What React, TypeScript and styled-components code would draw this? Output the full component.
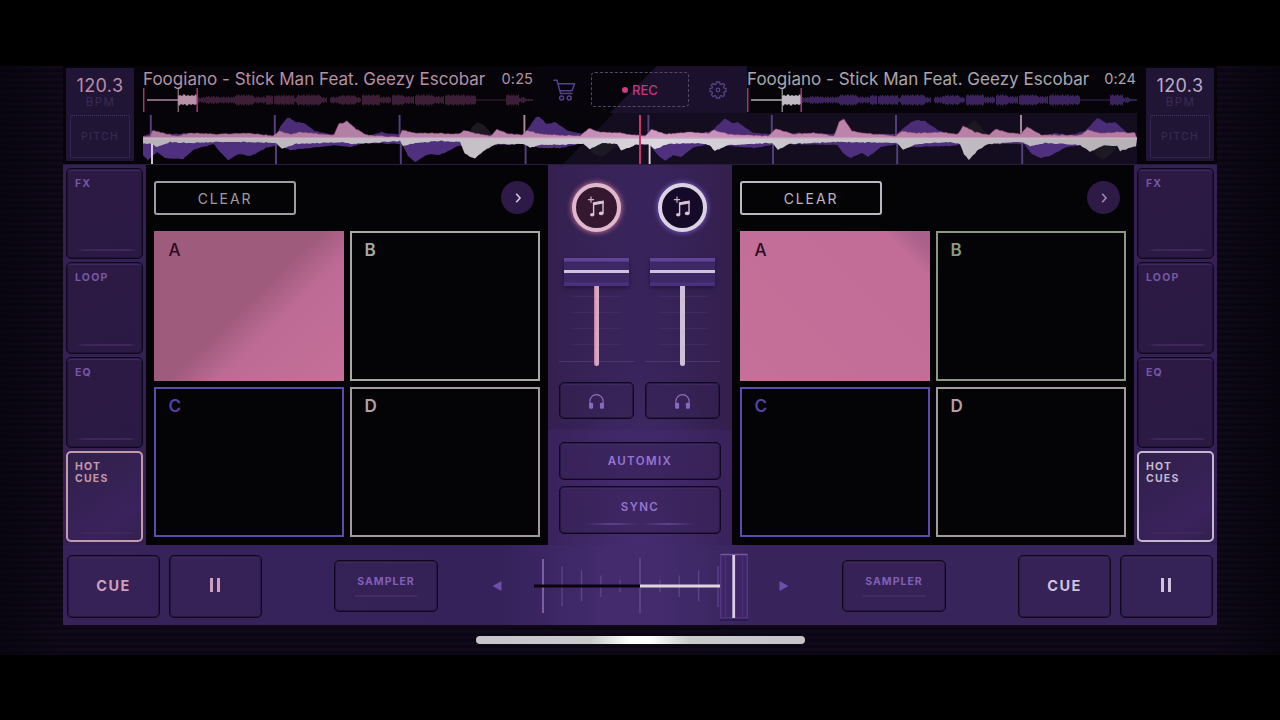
import React from 'react';
import styled, { createGlobalStyle, css } from 'styled-components';

const Global = createGlobalStyle`
  *{box-sizing:border-box}
  body{margin:0;background:#000;overflow:hidden;font-family:Inter,"Liberation Sans",sans-serif}
  button{font-family:inherit;margin:0;padding:0;background:none;border:0;display:block}
  svg{display:block}
`;

const Screen = styled.div`
  width:1280px;height:720px;background:#000;padding:66px 0 65px;
`;
const Stage = styled.main`
  height:589px;display:flex;flex-direction:column;align-items:center;
  background:
    linear-gradient(90deg,#05030b99 0,#05030b00 5%,#05030b00 95%,#05030bbb 100%),
    repeating-linear-gradient(180deg,#110919 0 3px,#0a0613 3px 6px);
`;
const Console = styled.section`
  width:1154px;height:559px;display:flex;flex-direction:column;
`;

const Header = styled.header`
  height:98px;display:flex;justify-content:space-between;padding:2px 3px 0;background:#060409;
`;
const Tempo = styled.div`
  width:68px;height:93px;background:#211535;display:flex;flex-direction:column;align-items:center;
`;
const Bpm = styled.div<{ $c: string }>`
  margin-top:8px;font-size:18px;line-height:20px;color:${p => p.$c};letter-spacing:.35px;
`;
const BpmLabel = styled.div`
  font-size:11.5px;line-height:12px;letter-spacing:1.4px;color:#3a2a54;padding-left:1px;
`;
const Pitch = styled.div`
  margin-top:7px;width:60px;height:43px;border:1px dotted #46346a;border-radius:2px;
  font-size:10.5px;letter-spacing:1.3px;color:#3b2b58;display:flex;align-items:center;justify-content:center;
`;
const Tracks = styled.div`
  width:994px;display:flex;flex-direction:column;
`;
const TrackRow = styled.div`
  height:45px;display:flex;
`;
const Track = styled.div<{ $w: number }>`
  width:${p => p.$w}px;padding-top:1px;
`;
const TitleLine = styled.div<{ $c: string }>`
  height:19px;display:flex;justify-content:space-between;align-items:center;color:${p => p.$c};white-space:nowrap;
`;
const Title = styled.span`font-size:17px;letter-spacing:.02px;line-height:20px;`;
const Time = styled.span`font-size:14.5px;line-height:20px;letter-spacing:.1px;padding-right:1px;`;
const Tools = styled.div`
  width:213px;height:47px;margin-top:-2px;display:flex;align-items:center;padding:0 0 0 18px;
  background:linear-gradient(135deg,#07040c 0 47%,#1b112d 47.5% 100%);
`;
const Rec = styled.button`
  margin:0 20px 0 15px;width:98px;height:35px;border:1px dashed #554867;border-radius:4px;
  color:#c5367d;font-size:13px;font-weight:500;display:flex;align-items:center;justify-content:center;gap:4px;
  &::before{content:"";width:6px;height:6px;border-radius:50%;background:#cf3a84}
`;
const WaveBox = styled.div`
  width:994px;height:51px;
  background:linear-gradient(135deg,transparent 0 calc(50% - 37px),#140d20 calc(50% - 36px));
`;

const Body = styled.div`
  height:381px;display:flex;border-top:1px solid #271c3b;background:#030305;
`;
const Side = styled.nav`
  width:83px;height:380px;padding:3px;display:flex;flex-direction:column;gap:3px;
  background:#352054;
`;
const Tab = styled.button<{ $on?: string }>`
  flex:1;width:77px;border-radius:5px;border:${p => p.$on ? `2px solid ${p.$on}` : '1px solid #0e081d'};
  background:${p => p.$on ? 'linear-gradient(145deg,#302049,#3a225c 75%,#33204f)' : 'linear-gradient(160deg,#2d1a44,#2a1a43)'};
  box-shadow:${p => p.$on ? 'none' : 'inset 0 0 0 1px #0e081d66,inset 0 2px 0 #3f2a65'};
  color:${p => p.$on || '#7557a5'};font-size:10.5px;line-height:12px;font-weight:700;letter-spacing:1.2px;text-align:left;
  display:flex;flex-direction:column;justify-content:space-between;padding:${p => p.$on ? '8px 5px 6px 7px' : '9px 6px 7px 8px'};white-space:pre-line;
  &::after{content:"";height:2px;margin-left:1px;background:linear-gradient(90deg,#3b275300,#3d2857 15%,#3d2857 90%,#3b275300)}
`;
const DeckPanel = styled.section`
  width:402px;height:380px;padding:16px 8px 8px;display:flex;flex-direction:column;background:#040406;
`;
const DeckHead = styled.div`
  height:50px;display:flex;justify-content:space-between;padding-right:6px;
`;
const Clear = styled.button<{ $c: string }>`
  width:142px;height:34px;border:2px solid ${p => p.$c};border-radius:3px;color:${p => p.$c};
  font-size:14px;letter-spacing:1.9px;
`;
const Next = styled.button`
  width:33px;height:33px;border-radius:50%;background:#2d1a46;display:flex;align-items:center;justify-content:center;
`;
const Pads = styled.div`
  height:306px;display:grid;grid-template-columns:190px 190px;grid-template-rows:150px 150px;gap:6px;
`;
const Pad = styled.button<{ $line: string; $text: string; $fill?: string }>`
  border:2px solid ${p => p.$line};color:${p => p.$text};
  ${p => p.$fill ? css`border-color:transparent;background:${p.$fill} border-box;font-weight:500;` : css`background:#040406;font-weight:600;`}
  font-size:17px;line-height:20px;text-align:left;display:flex;padding:7px 12.5px;
`;

const Mixer = styled.section`
  width:184px;height:380px;display:flex;flex-direction:column;align-items:center;
  background:
    linear-gradient(180deg,transparent 0 264px,#4b2c7f40 265px 275px,#4b2c7f40),
    radial-gradient(ellipse 90px 190px at 50% 100%,#4b307799,transparent),
    linear-gradient(90deg,#342050,#38245a 40%,#38245a 60%,#341f4e);
`;
const Channels = styled.div`
  display:flex;gap:11px;padding:18px 1px 0 0;
`;
const Channel = styled.div`
  width:75px;display:flex;flex-direction:column;align-items:center;
`;
const Load = styled.button<{ $ring: string; $bg: string; $glow: string }>`
  width:49px;height:49px;border:4px solid ${p => p.$ring};border-radius:50%;background:${p => p.$bg};
  box-shadow:0 0 5px 1px ${p => p.$glow};display:flex;align-items:center;justify-content:center;
`;
const Fader = styled.div`
  margin-top:26px;width:75px;height:108px;display:flex;flex-direction:column;align-items:center;
  background:repeating-linear-gradient(180deg,transparent 0 15px,#4a366a66 15px 16px) 50% 23px/48px 78px no-repeat,
    linear-gradient(#4b376c,#4b376c) 50% 103px/75px 1px no-repeat;
`;
const FaderCap = styled.div`
  width:65px;height:28px;display:flex;align-items:center;
  background:linear-gradient(180deg,#62439a 0 3px,#3d2765 4px 24px,#4b317b 25px);
  box-shadow:0 2px 4px #160b2990;
  &::after{content:"";width:65px;height:3px;margin-top:-1px;background:#d2c0dc}
`;
const FaderStem = styled.div<{ $c: string }>`
  width:5px;height:80px;border-radius:0 0 3px 3px;background:${p => p.$c};
`;
const PlainButton = styled.button<{ $w: number; $h: number }>`
  width:${p => p.$w}px;height:${p => p.$h}px;border:1px solid #10081f;border-radius:5px;
  background:#35204f66;box-shadow:inset 0 0 0 1px #10081f66,inset 0 2px 0 #4a326d66;
  display:flex;flex-direction:column;align-items:center;justify-content:center;
`;
const CueButton = styled(PlainButton)`margin-top:16px;padding-top:1px;`;
const Actions = styled.div`
  margin-top:23px;display:flex;flex-direction:column;gap:6px;
`;
const Action = styled(PlainButton)`
  color:#9675d2;font-size:11.5px;font-weight:600;letter-spacing:1.4px;
`;
const SyncAction = styled(Action)`
  justify-content:flex-start;padding-top:13px;
`;
const SyncMarks = styled.div`
  margin-top:9px;display:flex;gap:2px;
  i{width:54px;height:2px;background:linear-gradient(90deg,transparent,#5e438c,transparent)}
`;

const Footer = styled.footer`
  height:80px;padding:2px 4px 0;display:flex;align-items:center;
  background:linear-gradient(90deg,#37235a 0,#35225b 38%,#432b6d 47%,#432b6d 52%,#38245b 60%,#36245a 100%);
`;
const Transport = styled(PlainButton)<{ $c: string }>`
  color:${p => p.$c};font-size:14.5px;font-weight:700;letter-spacing:1.4px;padding-bottom:2px;
`;
const Pair = styled.div`display:flex;gap:9px;`;
const Sampler = styled(PlainButton)`
  color:#8060b8;font-size:10.5px;font-weight:700;letter-spacing:1px;justify-content:flex-start;padding-top:14px;line-height:14px;
  &::after{content:"";margin-top:6px;width:62px;height:2px;background:#422b63}
`;
const Cross = styled.div`width:300px;margin:-2px 52px 0;height:80px;`;
const Bars = styled.span<{ $c: string }>`
  width:10px;height:14px;margin-right:1px;border:solid ${p => p.$c};border-width:0 3px;
`;
const Home = styled.div`
  margin-top:11px;width:329px;height:8px;border-radius:4px;
  background:linear-gradient(90deg,#c8c5ca 0,#cbcacb 35%,#fff 47%,#fff 53%,#cbcacb 65%,#c8c5ca);
`;

const ROSE = '#c49aab';
const LILAC = '#c4b8d0';

/* start, end, half height of each loudness block of a track */
const BLOCKS: number[][] = [
  [54, 62, 3], [62, 75, 4], [75, 92, 3.5], [92, 110, 5.5], [110, 123, 3.5], [123, 130, 5], [131, 151, 5], [151, 154, 3],
  [154, 178, 5.5], [178, 184, 3], [187, 196, 3.5], [196, 213, 5], [213, 218, 3], [219, 237, 5.5], [237, 248, 3.5],
  [249, 260, 5.5], [260, 271, 4], [272, 290, 5.5], [290, 301, 4], [302, 322, 5.5], [322, 333, 5], [333, 363, .6],
  [363, 376, 5.5], [376, 383, 3], [383, 390, 1.3],
];

function overviewPath() {
  let d = '';
  BLOCKS.forEach(([a, b, h]) => {
    for (let x = a; x < b; x++) {
      const v = h < 1 ? h : Math.max(.8, h - ((x * 7) % 5) * .35);
      d += `M${x} ${12 - v}h1.05v${2 * v}h-1.05z`;
    }
  });
  return d;
}
const OVERVIEW = overviewPath();

function Overview({ played, rest, mark }: { played: string; rest: string; mark: string }) {
  return (
    <svg width="391" height="24" viewBox="0 0 391 24">
      <path d={OVERVIEW} fill={rest} />
      <path d="M4 12H36" stroke={played} strokeWidth="1.4" />
      <path d="M35 8l2-1 2 1 2-2 2 2 2-1 2 1 2-1 2 1 2-2 1 2v8l-2 1-2-1-2 1-2-1-2 2-2-2-2 1-2-1-2 2-1-2z" fill={played} />
      <path d="M35.2 0V24" stroke={played} strokeWidth="1" />
      <path d="M.7 0V24M54.2 0V24" stroke={mark} strokeWidth="1.5" />
    </svg>
  );
}

const hash = (n: number) => { const s = Math.sin(n * 12.9898) * 43758.5453; return s - Math.floor(s); };

/* area between a straight axis and an outline with a little roughness */
function area(axis: number, pts: number[][], rough: number) {
  let d = `M${pts[0][0]} ${axis}`;
  for (let i = 0; i < pts.length - 1; i++) {
    const [x0, y0] = pts[i], [x1, y1] = pts[i + 1];
    for (let x = x0; x < x1; x += 2) {
      const t = (x - x0) / (x1 - x0);
      d += `L${x} ${(y0 + (y1 - y0) * t + (hash(x) - .5) * rough).toFixed(1)}`;
    }
  }
  return d + `L${pts[pts.length - 1][0]} ${axis}Z`;
}

const VIOLET_TOP = [[143, 136], [152, 133], [170, 134], [190, 133], [196, 135], [240, 134], [276, 136], [280, 127], [287, 118], [290, 118], [296, 122], [304, 123], [315, 131], [330, 134],
  [372, 135], [381, 132], [392, 134], [403, 134], [440, 134], [500, 135], [524, 135], [530, 126], [536, 117], [539, 117], [547, 124], [555, 122], [568, 131], [583, 134], [648, 135], [700, 134], [713, 130],
  [724, 119], [728, 120], [732, 123], [738, 122], [753, 133], [772, 134], [800, 133], [835, 134], [897, 134], [911, 122], [917, 120], [925, 121], [938, 130], [950, 134], [1021, 135], [1046, 135], [1056, 133], [1070, 135], [1085, 131], [1097, 118], [1100, 119], [1107, 123], [1115, 122], [1128, 134], [1137, 134]];
const PINK_TOP = [[143, 136], [150, 136], [153, 130], [162, 133], [176, 136], [190, 133], [220, 134], [250, 133], [273, 136], [279, 131], [290, 134], [300, 132], [334, 135], [339, 123], [343, 123], [347, 121], [356, 129], [367, 135], [399, 137],
  [402, 130], [415, 133], [430, 133], [459, 134], [464, 130], [475, 133], [491, 136], [497, 129], [506, 133], [522, 135], [527, 130], [540, 134], [580, 136], [589, 128], [600, 132], [620, 133], [645, 136], [652, 129], [665, 134],
  [690, 132], [708, 133], [714, 130], [728, 134], [768, 136], [776, 129], [792, 134], [815, 133], [834, 136], [839, 122], [844, 119], [852, 131], [862, 133], [896, 136], [902, 131], [915, 133], [940, 132], [958, 134], [963, 126], [975, 132], [989, 135], [996, 129], [1008, 133],
  [1021, 134], [1027, 127], [1042, 135], [1080, 135], [1088, 130], [1100, 133], [1115, 132], [1137, 133]];
const WHITE_LOW = [[143, 143], [152, 144], [157, 147], [170, 142], [190, 143], [215, 142], [250, 142], [276, 143], [282, 149], [295, 144], [340, 142], [352, 144], [400, 141], [403, 146], [415, 143], [440, 141], [460, 142], [465, 154], [471, 157], [475, 158], [485, 150], [496, 144], [524, 144], [530, 148], [540, 145],
  [583, 144], [590, 149], [602, 143], [617, 144], [621, 151], [635, 145], [648, 144], [655, 149], [668, 144], [700, 143], [709, 145], [715, 151], [728, 145], [772, 143], [778, 150], [790, 144], [837, 142], [897, 143], [903, 150], [916, 144], [950, 142], [960, 144], [964, 154], [969, 160], [978, 150], [988, 144],
  [1021, 142], [1030, 146], [1045, 143], [1080, 145], [1090, 152], [1104, 145], [1117, 146], [1120, 151], [1137, 146]];
const VIOLET_LOW = [[143, 155], [148, 160], [157, 152], [165, 158], [183, 159], [195, 149], [214, 144], [220, 152], [228, 160], [239, 154], [251, 156], [266, 148], [278, 145], [290, 150], [310, 148], [335, 145], [350, 147], [365, 143], [402, 144], [408, 156], [415, 162], [428, 154], [440, 155], [458, 146], [524, 144], [540, 148], [560, 148],
  [580, 144], [617, 143], [650, 145], [657, 154], [665, 161], [673, 155], [681, 157], [694, 147], [710, 144], [755, 148], [776, 144], [837, 145], [843, 153], [850, 158], [862, 153], [868, 157], [881, 147], [899, 144], [912, 147], [950, 146], [962, 144], [1024, 144], [1032, 154], [1041, 158], [1050, 156], [1066, 147], [1090, 144], [1137, 146]];
const BEATS = [150.8, 274.8, 399.6, 524.4, 648.4, 771.8, 896, 1021];

function Wave() {
  return (
    <svg width="994" height="51" viewBox="143 113 994 51">
      <defs>
        <linearGradient id="white" gradientUnits="userSpaceOnUse" x1="143" y1="0" x2="1137" y2="0">
          <stop offset="0" stopColor="#b9b3b9" /><stop offset=".4" stopColor="#c9c4ca" /><stop offset=".52" stopColor="#dcd7df" /><stop offset=".65" stopColor="#c9c5cb" /><stop offset="1" stopColor="#b5b1b5" />
        </linearGradient>
        <linearGradient id="pink" gradientUnits="userSpaceOnUse" x1="143" y1="0" x2="1137" y2="0">
          <stop offset="0" stopColor="#ab789d" /><stop offset=".4" stopColor="#bb86ae" /><stop offset=".52" stopColor="#d09bc4" /><stop offset=".65" stopColor="#be84ae" /><stop offset="1" stopColor="#b37d9f" />
        </linearGradient>
      </defs>
      <path d="M467 137L472 127 478 122 485 126 494 137ZM964 137L968 125 974 120 981 127 989 137ZM580 140L594 154 603 157 613 149 625 140ZM1088 142L1097 156 1103 160 1113 152 1121 142Z" fill="#1c1923" />
      <path d={area(139, VIOLET_TOP, .8)} fill="#4a2c77" />
      <path d={area(140, VIOLET_LOW, .8)} fill="#4f307e" />
      {BEATS.map((x, i) => (
        <React.Fragment key={x}>
          <path d={`M${x} 115V136`} stroke={i === 3 || i === 7 ? '#a98f9f' : '#57427f'} strokeWidth="1.9" />
          <path d={`M${x + 1.2} 140V164`} stroke={i === 0 || i === 4 ? '#d8d3da' : '#54407f'} strokeWidth="1.9" />
        </React.Fragment>
      ))}
      <path d={area(139.5, PINK_TOP, 1)} fill="url(#pink)" stroke="#8c3d68" strokeWidth=".5" />
      <path d={area(138, WHITE_LOW, 1)} fill="url(#white)" />
      <path d="M143 138.2H1137" stroke="#ceb4c8" strokeWidth="1.6" />
      <path d="M640 115V164" stroke="#c73367" strokeWidth="2" />
    </svg>
  );
}

const Cart = () => (
  <svg width="24" height="24" viewBox="0 0 24 24" fill="none" stroke="#54418b" strokeWidth="1.5" strokeLinecap="round" strokeLinejoin="round">
    <path d="M1.8 2.2H5L8.6 15.6H20M6 5.8H22.6L20 12.8H8" />
    <circle cx="9.6" cy="20" r="2" /><circle cx="17.2" cy="20" r="2" />
  </svg>
);
const Gear = () => (
  <svg width="18" height="18" viewBox="0 0 18 18" fill="none" stroke="#55427f" strokeWidth="1.3" strokeLinejoin="round">
    <path d="M7.4 1H10.6L11 3.1 12.2 3.6 14 2.4 15.8 4.2 14.5 5.9 15 7.2 17 7.5V10.5L15 10.9 14.5 12.2 15.7 13.9 13.8 15.7 12.2 14.5 11 15 10.6 17H7.4L7 15 5.8 14.5 4.2 15.7 2.3 13.9 3.5 12.2 3 10.9 1 10.5V7.5L3 7.2 3.5 5.9 2.2 4.2 4 2.4 5.8 3.6 7 3.1Z" />
    <circle cx="9" cy="9" r="1.8" />
  </svg>
);
const Note = () => (
  <svg width="26" height="26" viewBox="0 0 26 26" fill="none" stroke="#d5c3d6">
    <path d="M7 1.6V7.8M3.9 4.7H10.1" stroke="#c9b2c8" strokeWidth="1.2" />
    <path d="M9.6 19.6V8L19 6.4V18.2" strokeWidth="1.4" />
    <path d="M9.2 8.9L19.6 7.1" strokeWidth="2.8" />
    <ellipse cx="8.2" cy="19.8" rx="2.2" ry="1.8" fill="#d5c3d6" stroke="none" />
    <ellipse cx="17.2" cy="18.4" rx="2.4" ry="1.8" fill="#d5c3d6" stroke="none" />
  </svg>
);
const Phones = () => (
  <svg width="17" height="17" viewBox="0 0 17 17">
    <path d="M1.9 12V8.2A6.6 6.6 0 0 1 15.1 8.2V12" fill="none" stroke="#9070bd" strokeWidth="1.1" />
    <rect x="1.1" y="9.8" width="4" height="6" rx="1.4" fill="#8a68c6" />
    <rect x="11.9" y="9.8" width="4" height="6" rx="1.4" fill="#8a68c6" />
  </svg>
);
const Chevron = ({ c }: { c: string }) => (
  <svg width="12" height="12" viewBox="0 0 12 12"><path d="M4.2 1.8L8 6 4.2 10.2" fill="none" stroke={c} strokeWidth="1.7" /></svg>
);

function TempoBox({ c }: { c: string }) {
  return <Tempo><Bpm $c={c}>120.3</Bpm><BpmLabel>BPM</BpmLabel><Pitch>PITCH</Pitch></Tempo>;
}

function Tabs({ on }: { on: string }) {
  return <Side><Tab>FX</Tab><Tab>LOOP</Tab><Tab>EQ</Tab><Tab $on={on}>{'HOT\nCUES'}</Tab></Side>;
}

function Deck({ line, fill, arrow, b }: { line: string; fill: string; arrow: string; b: string }) {
  return (
    <DeckPanel>
      <DeckHead>
        <Clear $c={line}>CLEAR</Clear>
        <Next><Chevron c={arrow} /></Next>
      </DeckHead>
      <Pads>
        <Pad $line="#c06a94" $text="#2c0a1f" $fill={fill}>A</Pad>
        <Pad $line={b} $text={b}>B</Pad>
        <Pad $line="#5c4aac" $text="#5542a4">C</Pad>
        <Pad $line="#a39a9d" $text="#b79daa">D</Pad>
      </Pads>
    </DeckPanel>
  );
}

function Crossfader() {
  return (
    <svg width="300" height="80" viewBox="490 545 300 80">
      <path d="M501.5 581V591L492.5 586ZM779.5 581V591L788.5 586Z" fill="#6c4eab" />
      <path d="M543 559V613" stroke="#8e6db5" strokeWidth="1.6" />
      <path d="M562 566V606M581.5 570.5V601.5M600.8 575.5V597M620 579.5V592M660 579.5V592M679.2 575.5V597M698.6 570.5V601.5M718 566V607" stroke="#5d438c" strokeWidth="1.4" />
      <path d="M640 558V613" stroke="#65498f" strokeWidth="1.5" />
      <path d="M534 586H640" stroke="#09040e" strokeWidth="3" />
      <path d="M640 586H721" stroke="#ded5de" strokeWidth="3" />
      <rect x="720" y="555" width="28" height="66" fill="#20103a" opacity=".45" />
      <rect x="720.7" y="554.2" width="26.6" height="63.8" fill="#3d2566" stroke="#583b88" strokeWidth="1.2" />
      <path d="M725.5 556V617M742.5 556V617" stroke="#4b2f7a" strokeWidth="1.2" />
      <path d="M721 554.7H747" stroke="#8067a8" />
      <path d="M733.7 555V618" stroke="#dbcbe3" strokeWidth="2.8" />
    </svg>
  );
}

export default function App() {
  const title = 'Foogiano - Stick Man Feat. Geezy Escobar';
  return (
    <Screen>
      <Global />
      <Stage>
        <Console>
          <Header>
            <TempoBox c="#bd8ba9" />
            <Tracks>
              <TrackRow>
                <Track $w={391}>
                  <TitleLine $c="#b591a6"><Title>{title}</Title><Time>0:25</Time></TitleLine>
                  <Overview played="#b792a9" rest="#3c1e36" mark="#a53872" />
                </Track>
                <Tools><Cart /><Rec>REC</Rec><Gear /></Tools>
                <Track $w={390}>
                  <TitleLine $c="#aaa6af"><Title>{title}</Title><Time>0:24</Time></TitleLine>
                  <Overview played="#c0bbc3" rest="#3b245d" mark="#a53872" />
                </Track>
              </TrackRow>
              <WaveBox><Wave /></WaveBox>
            </Tracks>
            <TempoBox c="#b9adc5" />
          </Header>
          <Body>
            <Tabs on={ROSE} />
            <Deck line="#a09ca4" arrow="#d5bfda" b="#aaa8a4" fill="linear-gradient(136deg,#9f5b7c 0 49%,#bd6b95 63%,#c57099)" />
            <Mixer>
              <Channels>
                <Channel>
                  <Load $ring="#deb9cb" $bg="#35182f" $glow="#b8688e"><Note /></Load>
                  <Fader><FaderCap /><FaderStem $c="linear-gradient(90deg,#bd7596,#d5a9c5 40%,#d5a9c5)" /></Fader>
                  <CueButton $w={75} $h={37}><Phones /></CueButton>
                </Channel>
                <Channel>
                  <Load $ring="#dbd2e3" $bg="#150b28" $glow="#7355b8"><Note /></Load>
                  <Fader><FaderCap /><FaderStem $c="#cdbfda" /></Fader>
                  <CueButton $w={75} $h={37}><Phones /></CueButton>
                </Channel>
              </Channels>
              <Actions>
                <Action $w={162} $h={38}>AUTOMIX</Action>
                <SyncAction $w={162} $h={48}>SYNC<SyncMarks><i /><i /></SyncMarks></SyncAction>
              </Actions>
            </Mixer>
            <Deck line="#bcb8c2" arrow="#9f86b0" b="#8c9884" fill="linear-gradient(225deg,#a9608a 0 5%,#c16d97 14%,#c47099)" />
            <Tabs on={LILAC} />
          </Body>
          <Footer>
            <Pair>
              <Transport $w={93} $h={63} $c="#cf9fbd">CUE</Transport>
              <Transport $w={93} $h={63} $c="#cf9fbd"><Bars $c="#cf9fbd" /></Transport>
            </Pair>
            <Sampler $w={104} $h={52} style={{ marginLeft: 72 }}>SAMPLER</Sampler>
            <Cross><Crossfader /></Cross>
            <Sampler $w={104} $h={52} style={{ marginRight: 72 }}>SAMPLER</Sampler>
            <Pair>
              <Transport $w={93} $h={63} $c="#d0c1df">CUE</Transport>
              <Transport $w={93} $h={63} $c="#d0c1df"><Bars $c="#d0c1df" /></Transport>
            </Pair>
          </Footer>
        </Console>
        <Home />
      </Stage>
    </Screen>
  );
}
